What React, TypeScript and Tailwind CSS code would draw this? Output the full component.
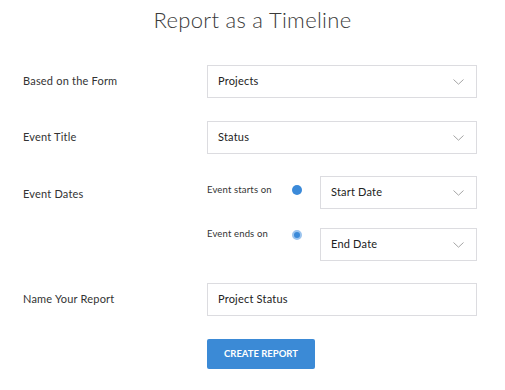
import React from "react";

function Chevron() {
  return (
    <svg width="11" height="6" viewBox="0 0 11 6" fill="none" className="shrink-0">
      <path d="M0.5 0.5 L5.5 5.2 L10.5 0.5" stroke="#a5a5a5" strokeWidth="1" />
    </svg>
  );
}

function Select({ value, className = "" }: { value: string; className?: string }) {
  return (
    <div
      className={
        "h-[33px] flex items-center justify-between border border-[#dcdce0] bg-white pl-[10px] pr-[12px] text-[11px] tracking-[0.2px] text-[#222] " +
        className
      }
    >
      <span>{value}</span>
      <Chevron />
    </div>
  );
}

function Label({ children }: { children: React.ReactNode }) {
  return <div className="w-[184px] shrink-0 text-[11px] tracking-[0.2px] text-[#333]">{children}</div>;
}

export default function App() {
  return (
    <div
      className="w-[505px] h-[390px] bg-white flex flex-col"
      style={{ fontFamily: "Lato, 'Open Sans', sans-serif" }}
    >
      <h1 className="text-center text-[22px] leading-[28px] font-light text-[#3a3a3a] pt-[6px] tracking-[0.3px]">
        Report as a Timeline
      </h1>
      <div className="flex flex-col pl-[23px] mt-[31px]">
        <div className="flex items-center">
          <Label>Based on the Form</Label>
          <Select value="Projects" className="w-[270px]" />
        </div>
        <div className="flex items-center mt-[23px]">
          <Label>Event Title</Label>
          <Select value="Status" className="w-[270px]" />
        </div>
        <div className="flex items-start mt-[22px]">
          <div className="w-[184px] shrink-0 text-[11px] tracking-[0.2px] text-[#333] pt-[10px]">Event Dates</div>
          <div className="flex flex-col w-[270px]">
            <div className="flex items-center">
              <div className="w-[85px] text-[9.5px] tracking-[0.15px] text-[#333] -mt-[5px]">Event starts on</div>
              <div className="w-[28px] flex -mt-[5px]">
                <span className="w-[10px] h-[10px] rounded-full bg-[#3b8ad9]" />
              </div>
              <Select value="Start Date" className="w-[157px]" />
            </div>
            <div className="flex items-center mt-[19px]">
              <div className="w-[85px] text-[9.5px] tracking-[0.15px] text-[#333] -mt-[20px]">Event ends on</div>
              <div className="w-[28px] flex -mt-[20px]">
                <span className="w-[10px] h-[10px] rounded-full bg-[#3b8ad9] border-2 border-[#9cc4ee]" />
              </div>
              <Select value="End Date" className="w-[157px]" />
            </div>
          </div>
        </div>
        <div className="flex items-center mt-[22px]">
          <Label>Name Your Report</Label>
          <div className="w-[270px] h-[33px] flex items-center border border-[#dcdce0] pl-[10px] text-[11px] tracking-[0.2px] text-[#222]">
            Project Status
          </div>
        </div>
        <div className="flex mt-[23px]">
          <div className="w-[184px] shrink-0" />
          <button className="w-[108px] h-[30px] bg-[#3b8ad6] text-white text-[9.5px] font-bold rounded-[2px]">
            CREATE REPORT
          </button>
        </div>
      </div>
    </div>
  );
}
